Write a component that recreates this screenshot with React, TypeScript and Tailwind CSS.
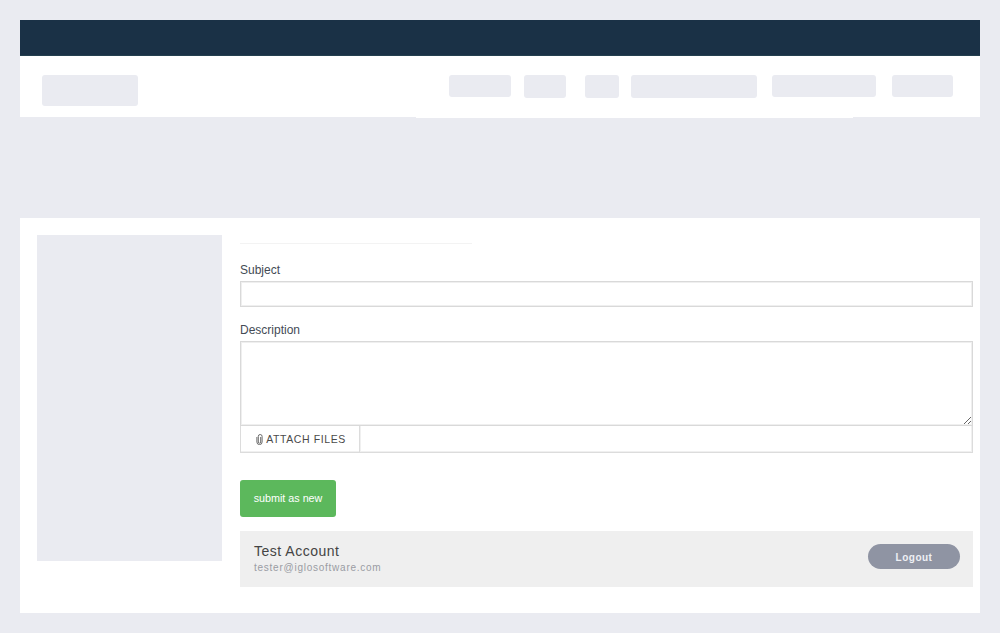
function Ph({ className }: { className: string }) {
  return <div className={"shrink-0 rounded-[3px] bg-[#eaebf1] " + className} />;
}

export default function App() {
  return (
    <div className="min-h-[633px] bg-[#eaebf1] p-5 font-['Liberation_Sans',Arial,sans-serif] text-[12px] text-[#3f4650]">
      <div className="h-[36px] border-b border-[#24404f] bg-[#1a3146]" />
      <div className="flex h-[61px] bg-white">
        <Ph className="ml-[22px] mt-[19px] h-[31px] w-[96px]" />
        <div className="ml-[278px] flex h-[62px] w-[437px] shrink-0 bg-white pl-[33px]">
          <Ph className="mt-[19px] h-[22px] w-[62px]" />
          <Ph className="ml-[13px] mt-[19px] h-[23px] w-[42px]" />
          <Ph className="ml-[19px] mt-[19px] h-[23px] w-[34px]" />
          <Ph className="ml-[12px] mt-[19px] h-[23px] w-[126px]" />
          <Ph className="ml-[15px] mt-[19px] h-[22px] w-[104px]" />
          <Ph className="ml-[16px] mt-[19px] h-[22px] w-[61px]" />
        </div>
      </div>

      <div className="mt-[101px] flex h-[395px] bg-white pl-[17px] pr-[7px] pt-[17px]">
        <div className="h-[326px] w-[185px] shrink-0 bg-[#eaebf1]" />
        <div className="ml-[18px] min-w-0 flex-1">
          <div className="mt-[8px] h-px w-[232px] bg-[#f3f3f3]" />
          <label className="mt-[18px] block h-[18px] leading-[16px] text-[#444b55]">Subject</label>
          <input
            readOnly
            className="mt-[1px] block h-[26px] w-full border border-[#d9d9d9] bg-white shadow-[inset_0_0_0_1px_#efefef] outline-none"
          />
          <label className="mt-[15px] block h-[18px] leading-[16px] text-[#444b55]">Description</label>
          <textarea
            readOnly
            className="mt-[1px] block h-[85px] w-full border border-[#d9d9d9] bg-white shadow-[inset_0_0_0_1px_#efefef] outline-none"
          />
          <div className="flex h-[27px] border border-t-0 border-[#dcdcdc] bg-white shadow-[inset_-1px_-1px_0_0_#f0f0f0]">
            <div className="flex w-[119px] items-center justify-center gap-[3px] border-r border-[#dcdcdc] pl-[2px] pt-[1px] text-[10.5px] tracking-[0.6px] text-[#4a4a4a] shadow-[1px_0_0_0_#f0f0f0]">
              <svg width="7" height="11" viewBox="0 0 7 11" fill="none" stroke="#6a6a6a" strokeWidth="1" aria-hidden="true">
                <path d="M4.7 3v5a1.2 1.2 0 0 1-2.4 0V2.4a1.9 1.9 0 0 1 3.8 0V8a2.6 2.6 0 0 1-5.2 0V3" />
              </svg>
              <span>ATTACH FILES</span>
            </div>
          </div>
          <button className="mt-[27px] block h-[37px] w-[96px] rounded-[3px] bg-[#5cb85c] text-[10.75px] text-white">
            submit as new
          </button>
          <div className="mt-[14px] flex h-[56px] justify-between bg-[#efefef] pl-[14px] pr-[13px]">
            <div className="pt-[12px]">
              <div className="text-[14px] leading-[16px] tracking-[0.5px] text-[#444]">Test Account</div>
              <div className="mt-[2px] text-[10px] leading-[13px] tracking-[0.75px] text-[#9a9ca3]">
                tester@iglosoftware.com
              </div>
            </div>
            <button className="mt-[13px] h-[25px] w-[92px] rounded-full bg-[#8f94a3] pt-[1px] text-[10px] font-bold tracking-[0.5px] text-[#eef0f5]">
              Logout
            </button>
          </div>
        </div>
      </div>
    </div>
  );
}
